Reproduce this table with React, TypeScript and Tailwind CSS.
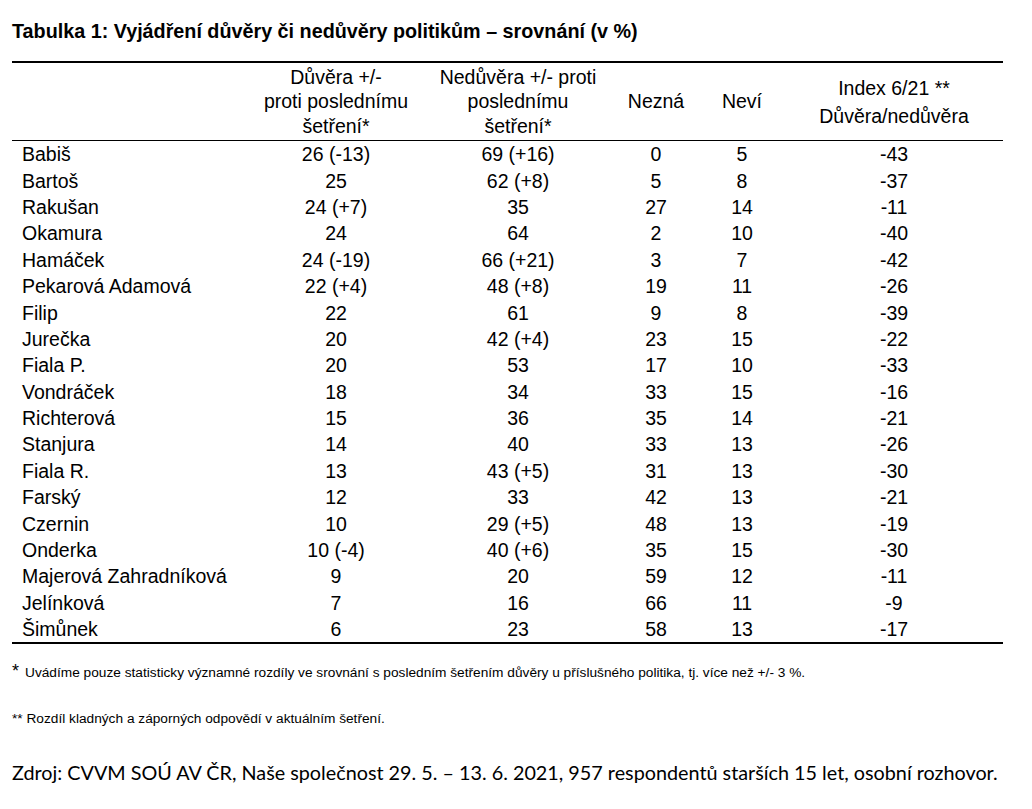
const rows: [string, string, string, string, string, string][] = [
  ["Babiš", "26 (-13)", "69 (+16)", "0", "5", "-43"],
  ["Bartoš", "25", "62 (+8)", "5", "8", "-37"],
  ["Rakušan", "24 (+7)", "35", "27", "14", "-11"],
  ["Okamura", "24", "64", "2", "10", "-40"],
  ["Hamáček", "24 (-19)", "66 (+21)", "3", "7", "-42"],
  ["Pekarová Adamová", "22 (+4)", "48 (+8)", "19", "11", "-26"],
  ["Filip", "22", "61", "9", "8", "-39"],
  ["Jurečka", "20", "42 (+4)", "23", "15", "-22"],
  ["Fiala P.", "20", "53", "17", "10", "-33"],
  ["Vondráček", "18", "34", "33", "15", "-16"],
  ["Richterová", "15", "36", "35", "14", "-21"],
  ["Stanjura", "14", "40", "33", "13", "-26"],
  ["Fiala R.", "13", "43 (+5)", "31", "13", "-30"],
  ["Farský", "12", "33", "42", "13", "-21"],
  ["Czernin", "10", "29 (+5)", "48", "13", "-19"],
  ["Onderka", "10 (-4)", "40 (+6)", "35", "15", "-30"],
  ["Majerová Zahradníková", "9", "20", "59", "12", "-11"],
  ["Jelínková", "7", "16", "66", "11", "-9"],
  ["Šimůnek", "6", "23", "58", "13", "-17"],
]

const cols = "grid grid-cols-[244px_160px_204px_72px_100px_204px_7px]"

export default function App() {
  return (
    <main className="min-h-[809px] w-[1032px] bg-white px-[12px] pt-[19px] text-black font-[family-name:Liberation_Sans,Arial,sans-serif]">
      <h1 className="mb-[18px] text-[19.75px] font-bold leading-[24px]">
        Tabulka 1: Vyjádření důvěry či nedůvěry politikům – srovnání (v %)
      </h1>

      <div className="w-[991px] border-y-2 border-black text-[19.5px]">
        <div className={`${cols} h-[78px] items-center border-b border-black text-center leading-[24.5px]`}>
          <div />
          <div>
            Důvěra +/-
            <br />
            proti poslednímu
            <br />
            šetření*
          </div>
          <div>
            Nedůvěra +/- proti
            <br />
            poslednímu
            <br />
            šetření*
          </div>
          <div>Nezná</div>
          <div>Neví</div>
          <div className="leading-[28px]">
            Index 6/21 **
            <br />
            Důvěra/nedůvěra
          </div>
          <div />
        </div>

        {rows.map((r) => (
          <div key={r[0]} className={`${cols} h-[26.4px] items-center leading-[26px]`}>
            <div className="pl-[10px]">{r[0]}</div>
            <div className="text-center">{r[1]}</div>
            <div className="text-center">{r[2]}</div>
            <div className="text-center">{r[3]}</div>
            <div className="text-center">{r[4]}</div>
            <div className="text-center">{r[5]}</div>
            <div />
          </div>
        ))}
      </div>

      <p className="mt-[19px] flex items-baseline text-[13.7px] leading-[16px]">
        <span className="mr-[6px] text-[18px]">*</span>
        Uvádíme pouze statisticky významné rozdíly ve srovnání s posledním šetřením důvěry u příslušného politika, tj. více než +/- 3 %.
      </p>

      <p className="mt-[30px] text-[13.7px] leading-[16px]">** Rozdíl kladných a záporných odpovědí v aktuálním šetření.</p>

      <p className="mt-[33px] text-[19.8px] leading-[24px] font-[family-name:Lato,Open_Sans,sans-serif]">
        Zdroj: CVVM SOÚ AV ČR, Naše společnost 29. 5. – 13. 6. 2021, 957 respondentů starších 15 let, osobní rozhovor.
      </p>
    </main>
  )
}
